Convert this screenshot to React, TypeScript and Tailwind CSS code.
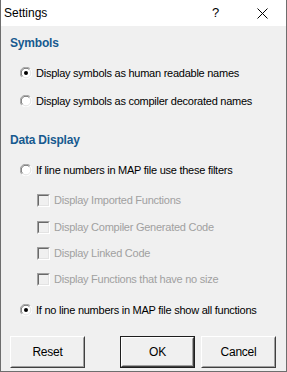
import type { ReactNode } from 'react'

function Radio({ checked }: { checked?: boolean }) {
  return (
    <svg width="12" height="12" viewBox="0 0 12 12" className="shrink-0">
      <circle cx="6" cy="6" r="5.5" fill="#fff" />
      <path d="M1.8 10.2 A5.5 5.5 0 0 1 10.2 1.8" fill="none" stroke="#a0a0a0" strokeWidth="1" />
      <path d="M2.6 9.4 A4.4 4.4 0 0 1 9.4 2.6" fill="none" stroke="#696969" strokeWidth="1" />
      <path d="M10.2 1.8 A5.5 5.5 0 0 1 1.8 10.2" fill="none" stroke="#ffffff" strokeWidth="1" />
      <path d="M9.4 2.6 A4.4 4.4 0 0 1 2.6 9.4" fill="none" stroke="#e3e3e3" strokeWidth="1" />
      {checked && <circle cx="6" cy="6" r="2" fill="#000" />}
    </svg>
  )
}

function Check() {
  return (
    <div className="w-[13px] h-[13px] shrink-0 border border-t-[#a0a0a0] border-l-[#a0a0a0] border-b-white border-r-white">
      <div className="w-full h-full border border-t-[#696969] border-l-[#696969] border-b-[#e3e3e3] border-r-[#e3e3e3] bg-[#f0f0f0]" />
    </div>
  )
}

function RadioRow({ checked, mt, children }: { checked?: boolean; mt: string; children: ReactNode }) {
  return (
    <div className={`h-[20px] flex items-center gap-[4px] ml-[10px] ${mt}`}>
      <Radio checked={checked} />
      <span className="text-black">{children}</span>
    </div>
  )
}

function CheckRow({ mt, children }: { mt: string; children: ReactNode }) {
  return (
    <div className={`h-[20px] flex items-center gap-[4px] ml-[27px] ${mt}`}>
      <Check />
      <span className="text-[#a0a0a0]">{children}</span>
    </div>
  )
}

function Btn({ label, isDefault }: { label: string; isDefault?: boolean }) {
  return (
    <div className={`w-[75px] h-[32px] ${isDefault ? 'border border-[#1e1e1e]' : ''}`}>
      <div className="w-full h-full border border-t-white border-l-white border-b-[#404040] border-r-[#404040]">
        <div className="w-full h-full flex items-center justify-center bg-[#f0f0f0] border border-t-[#f0f0f0] border-l-[#f0f0f0] border-b-[#a0a0a0] border-r-[#a0a0a0] text-black text-[12px]">
          {label}
        </div>
      </div>
    </div>
  )
}

export default function App() {
  return (
    <div
      className="w-[287px] h-[372px] bg-[#f0f0f0] border-x border-b border-[#6e6e6e] flex flex-col text-[11px] tracking-[-0.25px]"
      style={{ fontFamily: '"Liberation Sans", Arial, sans-serif' }}
    >
      <div className="h-[26px] bg-white flex items-center shrink-0">
        <span className="pl-[3px] text-[12px] tracking-normal text-black">Settings</span>
        <span className="ml-auto text-[13px] text-black mr-[38px]">?</span>
        <svg width="11" height="11" viewBox="0 0 11 11" className="mr-[18px]">
          <path d="M0.5 0.5 L10.5 10.5 M10.5 0.5 L0.5 10.5" stroke="#000" strokeWidth="1" />
        </svg>
      </div>

      <div className="pl-[9px] flex flex-col">
        <div className="h-[20px] flex items-center mt-[7px] text-[12px] font-bold text-[#175a8f] tracking-[-0.2px]">Symbols</div>
        <RadioRow checked mt="mt-[10px]">Display symbols as human readable names</RadioRow>
        <RadioRow mt="mt-[8px]">Display symbols as compiler decorated names</RadioRow>

        <div className="h-[20px] flex items-center mt-[19px] text-[12px] font-bold text-[#175a8f] tracking-[-0.2px]">Data Display</div>
        <RadioRow mt="mt-[10px]">If line numbers in MAP file use these filters</RadioRow>
        <CheckRow mt="mt-[10px]">Display Imported Functions</CheckRow>
        <CheckRow mt="mt-[7px]">Display Compiler Generated Code</CheckRow>
        <CheckRow mt="mt-[6px]">Display Linked Code</CheckRow>
        <CheckRow mt="mt-[6px]">Display Functions that have no size</CheckRow>
        <RadioRow checked mt="mt-[11px]">If no line numbers in MAP file show all functions</RadioRow>

        <div className="flex mt-[16px]">
          <Btn label="Reset" />
          <div className="ml-[35px]">
            <Btn label="OK" isDefault />
          </div>
          <div className="ml-[6px]">
            <Btn label="Cancel" />
          </div>
        </div>
      </div>
    </div>
  )
}
